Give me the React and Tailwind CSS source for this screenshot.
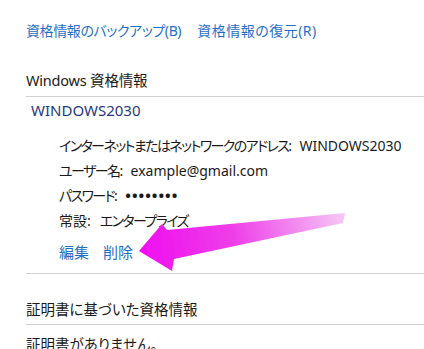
import React from "react";

// Credential manager panel with an annotation arrow
const font = "[font-family:'Noto_Sans','Noto_Sans_CJK_JP',sans-serif] [font-feature-settings:'palt']";

const Arrow = () => (
  <svg
    className="absolute left-0 top-0 pointer-events-none"
    width="424"
    height="349"
    viewBox="0 0 424 349"
  >
    <defs>
      <linearGradient id="arrowFill" x1="140" y1="250" x2="345" y2="216" gradientUnits="userSpaceOnUse">
        <stop offset="0" stopColor="#f00ef0" />
        <stop offset="0.45" stopColor="#ee3ee8" />
        <stop offset="1" stopColor="#f6c8f4" />
      </linearGradient>
      <filter id="soft" x="-10%" y="-30%" width="120%" height="160%">
        <feGaussianBlur stdDeviation="0.6" />
      </filter>
    </defs>
    <polygon
      points="139,251 162,224 167,230 345,213 343,223 174,259 172,271"
      fill="url(#arrowFill)"
      filter="url(#soft)"
    />
  </svg>
);

const Detail = ({ label, tight = true, children }) => (
  <div className="flex items-baseline whitespace-nowrap">
    <span className={tight ? "tracking-[-1.6px]" : ""}>{label}:</span>
    <span className="ml-[9px]">{children}</span>
  </div>
);

export default function App() {
  return (
    <div className={`relative w-[424px] h-[349px] overflow-hidden bg-white text-[#1a1a1a] ${font}`}>
      <div className="pl-[26px]">
        <div className="pt-[21px] flex gap-[16px] text-[14px] leading-[20px] text-[#1f6fc5] whitespace-nowrap">
          <span className="tracking-[-0.4px]">資格情報のバックアップ(B)</span>
          <span className="tracking-[0.5px]">資格情報の復元(R)</span>
        </div>

        <div className="mt-[29px] pb-[6px] border-b border-[#d0d0d0] text-[14.5px] leading-[20px] tracking-[-0.2px]">
          Windows 資格情報
        </div>

        <div className="mt-[3px] pl-[5px] text-[15px] leading-[20px] text-[#27397f]">WINDOWS2030</div>

        <div className="mt-[13px] pl-[33px] text-[14px] leading-[25px] pb-[8px] border-b border-[#d0d0d0]">
          <Detail label="インターネットまたはネットワークのアドレス">WINDOWS2030</Detail>
          <Detail label="ユーザー名">example@gmail.com</Detail>
          <Detail label="パスワード">
            <span className="text-[15px] font-bold tracking-[1px]">••••••••</span>
          </Detail>
          <Detail label="常設" tight={false}>
            <span className="tracking-[-1.6px]">エンタープライズ</span>
          </Detail>
          <div className="mt-[7px] flex gap-[14px] text-[15px] text-[#1f6fc5]">
            <span>編集</span>
            <span>削除</span>
          </div>
        </div>

        <div className="mt-[25px] pb-[5px] border-b border-[#d0d0d0] text-[14.5px] leading-[20px]">
          証明書に基づいた資格情報
        </div>

        <div className="mt-[9px] text-[14.5px] leading-[20px]">証明書がありません。</div>
      </div>
      <Arrow />
    </div>
  );
}
